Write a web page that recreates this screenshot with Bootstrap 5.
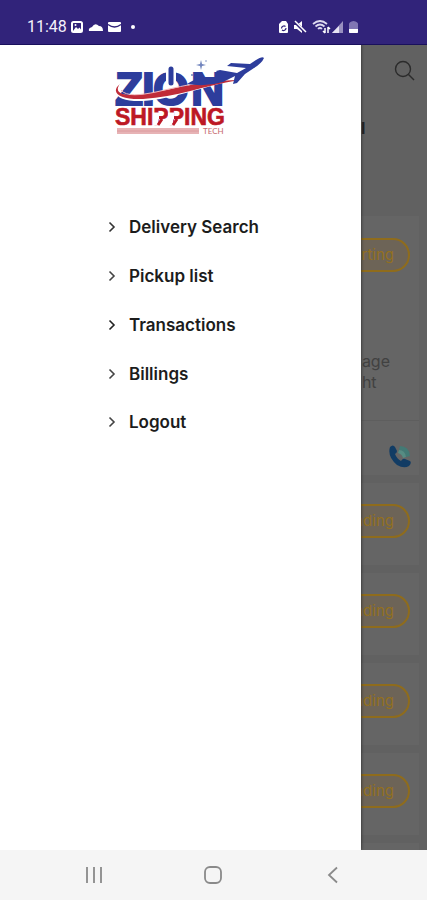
<!DOCTYPE html>
<html lang="en">
<head>
<meta charset="utf-8">
<meta name="viewport" content="width=device-width, initial-scale=1">
<title>Zion Shipping Tech</title>
<link href="https://cdn.jsdelivr.net/npm/bootstrap@5.3.0/dist/css/bootstrap.min.css" rel="stylesheet">
<style>
  body { font-family: Inter, "Liberation Sans", sans-serif; background: #fff; }
  svg { display: block; flex-shrink: 0; }
  .status-bar { height: 44px; background: #31237a; color: #f4f2fb; padding: 10px 68px 0 27px; box-shadow: 0 1px 0 #19105c; z-index: 2; }
  .status-time { font: 16px/20px Roboto, sans-serif; }
  .drawer { background: #fff; box-shadow: 0 0 3px #222; z-index: 1; }
  .brand { margin: 8px 0 0 111px; }
  .menu { margin: 73px 0 0 108px; }
  .menu a { color: #1c1c1c; font-size: 17px; font-weight: 600; line-height: 24px; gap: 13px; margin-bottom: 25px; }
  .menu a + a + a + a { margin-bottom: 24px; }
  .dimmed { width: 66px; background: #616161; padding-right: 8px; }
  .dimmed-top { height: 172px; padding-top: 16px; }
  .page-title { font-size: 16px; font-weight: 700; line-height: 20px; color: #222; margin: 37px 0 0; }
  .order { background: #656565; min-height: 82px; margin-bottom: 8px; padding-top: 21px; }
  .order-open { height: 259px; padding-top: 22px; }
  .state { border: 2px solid #8f6c1c; border-radius: 17px; background: #6d6457; color: #93701f; font-size: 15px; line-height: 29px; height: 34px; padding: 0 14px; margin-right: 9px; }
  .note { color: #414141; font-size: 16px; line-height: 21px; margin: 79px 29px 0 0; }
  .order-call { border-top: 1px solid #5e5e5e; margin-top: 27px; padding: 23px 7px 0 0; }
  .nav-bar { height: 50px; background: #f5f5f5; padding: 0 34px; z-index: 2; }
  .plain { border: 0; background: none; padding: 0; }
</style>
</head>
<body>
<div class="d-flex flex-column vh-100 overflow-hidden">
  <header class="status-bar d-flex flex-shrink-0 align-items-center justify-content-between">
    <div class="d-flex align-items-center gap-1">
      <span class="status-time">11:48</span>
      <svg width="66" height="14" viewBox="0 0 66 14" aria-hidden="true">
        <rect x="1" y="2" width="10" height="10" rx="1.5" fill="none" stroke="#fff" stroke-width="2"/>
        <path d="M2 11l3-4 2 2 1.500-1.500L11 11z" fill="#fff"/><circle cx="4.500" cy="5" r="1" fill="#fff"/>
        <path d="M18 11q-1-3 3-4 3-5 7-1 4 0 4 5z" fill="#fff"/>
        <rect x="37" y="2" width="13" height="10" rx="1" fill="#fff"/><path d="M37 4.500q6.500 5 13 0" fill="none" stroke="#31237a" stroke-width="1.300"/>
        <circle cx="62" cy="7" r="2" fill="#fff"/>
      </svg>
    </div>
    <svg width="82" height="16" viewBox="0 0 82 16" aria-hidden="true">
      <path d="M2 5l3-3h4l2 3v8q0 1-1 1H3q-1 0-1-1z" fill="#fff"/><path d="M4.500 9.500a2.500 2.500 0 0 1 4-2M9 9a2.500 2.500 0 0 1-4 2" fill="none" stroke="#31237a" stroke-width="1.200"/>
      <path d="M17 6h3l5-4v12l-5-4h-3z" fill="#fff"/><path d="M17 2l12 12" stroke="#31237a" stroke-width="3"/><path d="M18 2l11 11" stroke="#fff" stroke-width="1.500"/>
      <path d="M36 5q7-6 14 0M38.500 7.500q4.500-4 9 0M41 10q2-2 4 0" fill="none" stroke="#ddd9ef" stroke-width="1.700"/><path d="M48 9v5m-2-2l2 2M51 14V8m0 0l2 2" fill="none" stroke="#fff" stroke-width="1.500"/>
      <path d="M55 14L66 2v12z" fill="#9990c0"/><path d="M55 14l7-7v7z" fill="#e7e4f3"/>
      <path d="M72 5q0-2 4.500-3Q81 3 81 5v9h-9z" fill="#8176b3"/><path d="M72 10h9v3q0 1-1 1h-7q-1 0-1-1z" fill="#fff"/>
    </svg>
  </header>

  <main class="d-flex flex-grow-1 overflow-hidden">
    <div class="drawer flex-grow-1">
      <svg class="brand" width="158" height="90" viewBox="111 52 158 90" role="img" aria-label="Zion Shipping Tech">
        <text x="115 142 153 191" y="105" font-family="Liberation Sans, Arial, sans-serif" font-weight="700" font-size="46" fill="#2d3d9c" stroke="#2d3d9c" stroke-width="2">ZION</text>
        <path d="M171 67v19" stroke="#fff" stroke-width="10"/>
        <path d="M171 69v14" stroke="#2d3d9c" stroke-width="5" stroke-linecap="round"/>
        <path d="M119 86c-5 8 5 10 20 9 31-2 53-13 102-16-40 8-67 20-98 22-20 1-33-5-24-15z" fill="#fff"/>
        <path d="M120 84c-8 10 7 13 25 10 27-4 50-13 94-14-36 6-62 17-96 19-22 1-34-6-23-15z" fill="#c02b38"/>
        <path d="M121 90c5 7 20 5 35 2 22-5 42-10 70-12" fill="none" stroke="#f2b6b8" stroke-width="1"/>
        <path d="M187 84c8-5 14-7 21-7 5 0 9 0 12-1l-4-5 4-1 17 3 9-5-19-2 4-3 19 1 6-4q6-4 8-2-2 5-10 10l-9 6-8 9-4 1 2-8-12 6q-17 5-36 2z" fill="#2d3d9c"/>
        <path d="M201 60l1 4 4 1-4 1-1 4-1-4-4-1 4-1z" fill="#7184bd"/><circle cx="192" cy="75" r="1" fill="#7184bd"/><circle cx="206" cy="61" r="1" fill="#b1bddb"/>
        <text x="115" y="125" font-family="Liberation Sans, Arial, sans-serif" font-weight="700" font-size="23" fill="#bd1824" stroke="#bd1824" stroke-width=".6">SHIPPING</text>
        <path d="M153 112.500h6v7h-1v6h-5zM168 112.500h6v7h-1v6h-5z" fill="#fff"/>
        <path d="M162 119l-4 6M177 119l-4 6" stroke="#bd1824" stroke-width="3"/>
        <rect x="117" y="128" width="82" height="6" fill="#e7b3b5"/><path d="M117 131h82" stroke="#dc9a9d"/>
        <text x="203" y="134" font-family="Lato, sans-serif" font-size="8" fill="#c66a70">TECH</text>
      </svg>
      <nav class="menu d-flex flex-column align-items-start" aria-label="Main">
        <a class="d-flex align-items-center text-decoration-none" href="#search"><svg width="8" height="12" viewBox="0 0 8 12" fill="none" stroke="#333" stroke-width="1.600"><path d="M1.500 1.500L6 6l-4.500 4.500"/></svg>Delivery Search</a>
        <a class="d-flex align-items-center text-decoration-none" href="#pickup"><svg width="8" height="12" viewBox="0 0 8 12" fill="none" stroke="#444" stroke-width="1.600"><path d="M1.500 1.500L6 6l-4.500 4.500"/></svg>Pickup list</a>
        <a class="d-flex align-items-center text-decoration-none" href="#transactions"><svg width="8" height="12" viewBox="0 0 8 12" fill="none" stroke="#222" stroke-width="1.600"><path d="M1.500 1.500L6 6l-4.500 4.500"/></svg>Transactions</a>
        <a class="d-flex align-items-center text-decoration-none" href="#billings"><svg width="8" height="12" viewBox="0 0 8 12" fill="none" stroke="#444" stroke-width="1.600"><path d="M1.500 1.500L6 6l-4.500 4.500"/></svg>Billings</a>
        <a class="d-flex align-items-center text-decoration-none" href="#logout"><svg width="8" height="12" viewBox="0 0 8 12" fill="none" stroke="#444" stroke-width="1.600"><path d="M1.500 1.500L6 6l-4.500 4.500"/></svg>Logout</a>
      </nav>
    </div>

    <div class="dimmed flex-shrink-0 overflow-hidden">
      <div class="dimmed-top d-flex flex-column">
        <button class="plain align-self-end me-1" type="button" aria-label="Search">
          <svg width="21" height="21" viewBox="0 0 21 21" fill="none" stroke="#2b2b2b" stroke-width="1.400"><circle cx="9" cy="9" r="7.500"/><path d="M14.500 14.500L20 20"/></svg>
        </button>
        <p class="page-title">l</p>
      </div>
      <section class="order order-open d-flex flex-column align-items-end">
        <span class="state">Starting</span>
        <p class="note">age<br>ht</p>
        <div class="order-call align-self-stretch d-flex justify-content-end">
          <button class="plain" type="button" aria-label="Call">
            <svg width="24" height="24" viewBox="0 0 24 24"><path d="M2 3q3-3 5 0l2 4q0 2-2 3 2 5 6 7 2-3 4-2l5 2q2 2-1 5-5 3-12-1Q-1 12 2 3z" fill="#123c64"/><path d="M12 2q9 0 10 10l-4 1q-1-6-7-7z" fill="#437a75"/><path d="M11 6q6 0 7 7l-3 1q-1-4-5-5z" fill="#568c83"/></svg>
          </button>
        </div>
      </section>
      <section class="order d-flex flex-column align-items-end"><span class="state">Pending</span></section>
      <section class="order d-flex flex-column align-items-end"><span class="state">Pending</span></section>
      <section class="order d-flex flex-column align-items-end"><span class="state">Pending</span></section>
      <section class="order d-flex flex-column align-items-end"><span class="state">Pending</span></section>
      <section class="order"></section>
    </div>
  </main>

  <footer class="nav-bar d-flex flex-shrink-0 align-items-center justify-content-around">
    <button class="plain" type="button" aria-label="Recent apps"><svg width="18" height="18" viewBox="0 0 18 18" stroke="#8a8a8a" stroke-width="1.800"><path d="M2 1v16M9 1v16M16 1v16"/></svg></button>
    <button class="plain" type="button" aria-label="Home"><svg width="18" height="18" viewBox="0 0 18 18" fill="none" stroke="#8a8a8a" stroke-width="1.800"><rect x="1" y="1" width="16" height="16" rx="5"/></svg></button>
    <button class="plain" type="button" aria-label="Back"><svg width="18" height="18" viewBox="0 0 18 18" fill="none" stroke="#8a8a8a" stroke-width="1.800"><path d="M13 1.500L5 9l8 7.500"/></svg></button>
  </footer>
</div>
<script src="https://cdn.jsdelivr.net/npm/bootstrap@5.3.0/dist/js/bootstrap.bundle.min.js"></script>
</body>
</html>
